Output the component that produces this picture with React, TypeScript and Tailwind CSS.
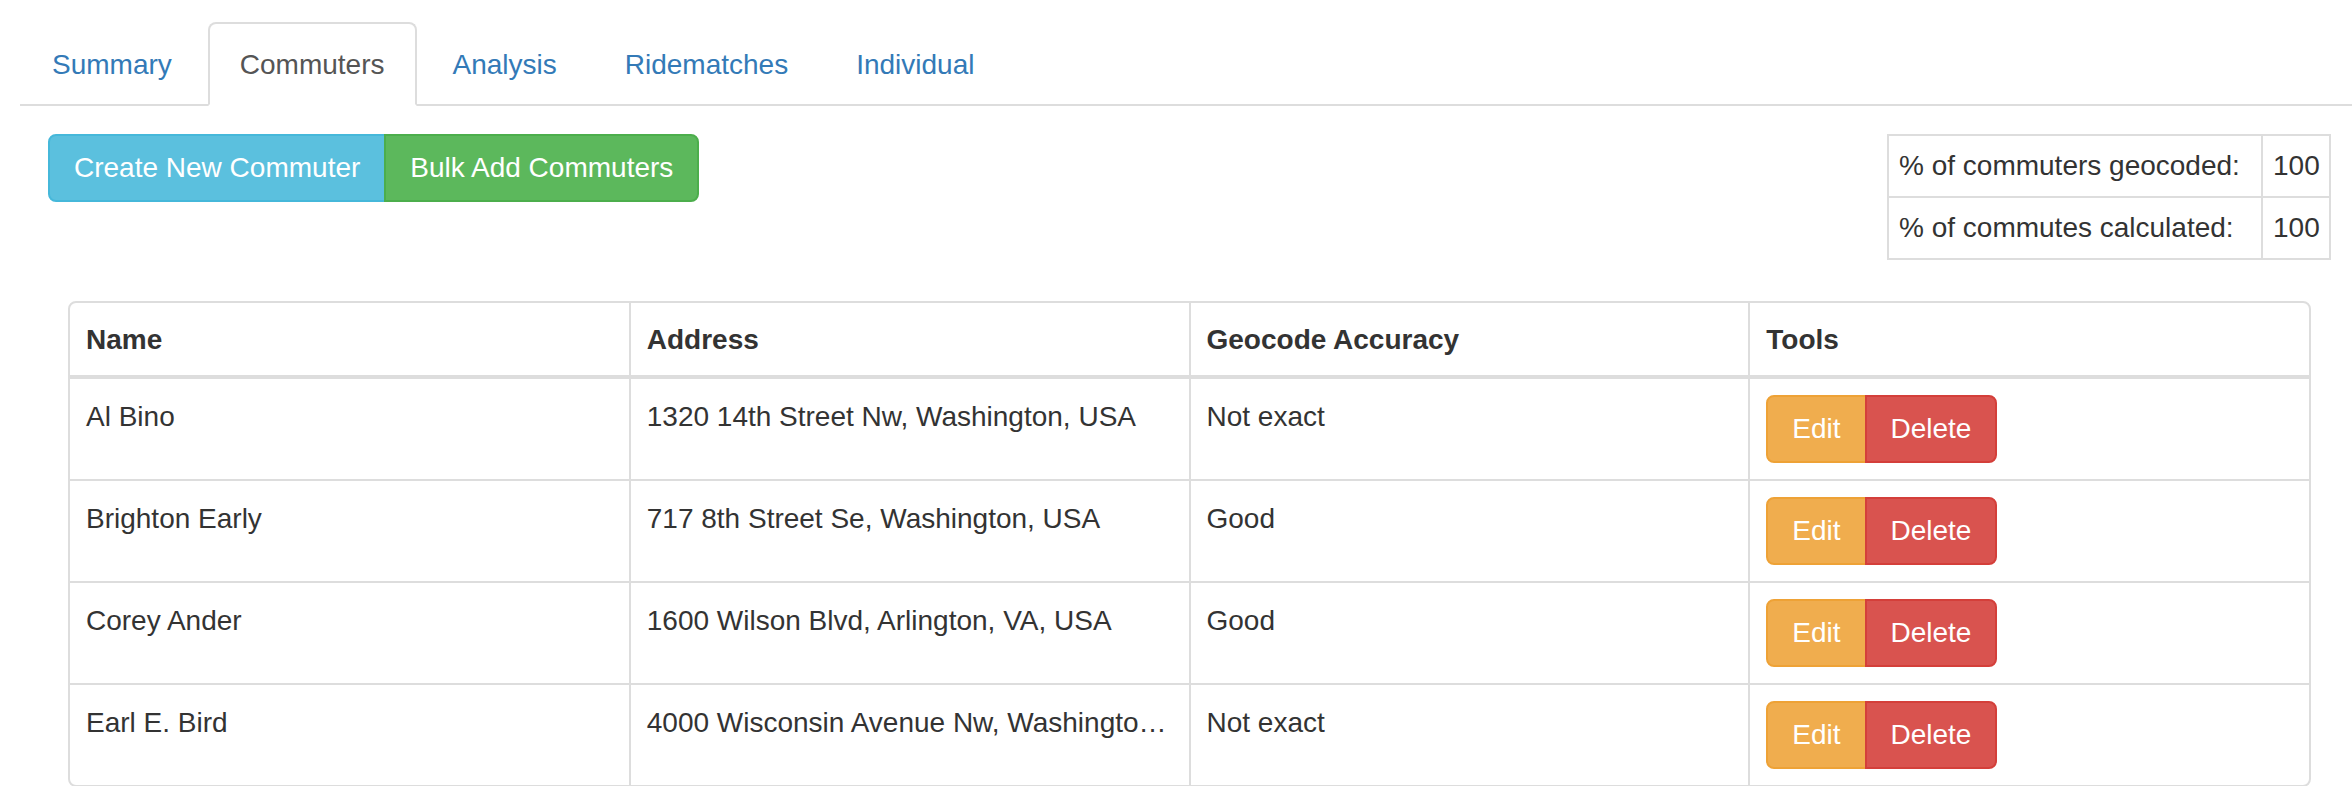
import React from "react";

interface Commuter {
  name: string;
  address: string;
  accuracy: string;
}

const commuters: Commuter[] = [
  { name: "Al Bino", address: "1320 14th Street Nw, Washington, USA", accuracy: "Not exact" },
  { name: "Brighton Early", address: "717 8th Street Se, Washington, USA", accuracy: "Good" },
  { name: "Corey Ander", address: "1600 Wilson Blvd, Arlington, VA, USA", accuracy: "Good" },
  { name: "Earl E. Bird", address: "4000 Wisconsin Avenue Nw, Washington, USA", accuracy: "Not exact" },
];

const tabs = ["Summary", "Commuters", "Analysis", "Ridematches", "Individual"];

const App: React.FC = () => {
  const active = "Commuters";

  return (
    <div className="min-h-screen bg-white text-[#333] text-[28px] leading-[40px] font-['Liberation_Sans',Arial,sans-serif]">
      {/* TABS */}
      <ul className="flex ml-[20px] mt-[22px] border-b-2 border-[#ddd]">
        {tabs.map((t) => (
          <li key={t} className="mr-[4px] -mb-[2px]">
            <a
              className={`block px-[30px] pt-[21px] pb-[19px] rounded-t-[8px] border-2 ${
                t === active
                  ? "border-[#ddd] border-b-white bg-white text-[#555]"
                  : "border-transparent text-[#337ab7]"
              }`}
            >
              {t}
            </a>
          </li>
        ))}
      </ul>

      {/* ACTIONS + STATS */}
      <div className="flex justify-between items-start mt-[28px] pl-[48px] pr-[21px]">
        <div className="flex">
          <button className="px-[24px] py-[12px] border-2 border-[#46b8da] bg-[#5bc0de] text-white rounded-l-[8px]">
            Create New Commuter
          </button>
          <button className="-ml-[2px] px-[24px] py-[12px] border-2 border-[#4cae4c] bg-[#5cb85c] text-white rounded-r-[8px]">
            Bulk Add Commuters
          </button>
        </div>
        <table className="border-collapse table-fixed w-[444px]">
          <colgroup>
            <col className="w-[374px]" />
            <col />
          </colgroup>
          <tbody>
            <tr>
              <td className="border-2 border-[#ddd] px-[10px] py-[10px] whitespace-nowrap">% of commuters geocoded:</td>
              <td className="border-2 border-[#ddd] px-[10px] py-[10px]">100</td>
            </tr>
            <tr>
              <td className="border-2 border-[#ddd] px-[10px] py-[10px] whitespace-nowrap">% of commutes calculated:</td>
              <td className="border-2 border-[#ddd] px-[10px] py-[10px]">100</td>
            </tr>
          </tbody>
        </table>
      </div>

      {/* COMMUTERS TABLE */}
      <div className="ml-[68px] mr-[41px] mt-[41px] border-2 border-[#ddd] rounded-[8px] overflow-hidden">
        <table className="w-full table-fixed border-collapse">
          <thead>
            <tr className="border-b-4 border-[#ddd]">
              <th className="text-left font-bold px-[16px] pt-[17px] pb-[15px]">Name</th>
              <th className="text-left font-bold px-[16px] pt-[17px] pb-[15px] border-l-2 border-[#ddd]">Address</th>
              <th className="text-left font-bold px-[16px] pt-[17px] pb-[15px] border-l-2 border-[#ddd]">Geocode Accuracy</th>
              <th className="text-left font-bold px-[16px] pt-[17px] pb-[15px] border-l-2 border-[#ddd]">Tools</th>
            </tr>
          </thead>
          <tbody>
            {commuters.map((c) => (
              <tr key={c.name} className="border-t-2 border-[#ddd]">
                <td className="align-top px-[16px] pt-[18px] pb-[14px]">{c.name}</td>
                <td className="align-top px-[16px] pt-[18px] pb-[14px] border-l-2 border-[#ddd] truncate">{c.address}</td>
                <td className="align-top px-[16px] pt-[18px] pb-[14px] border-l-2 border-[#ddd]">{c.accuracy}</td>
                <td className="align-top p-[16px] border-l-2 border-[#ddd]">
                  <div className="flex">
                    <button className="px-[24px] py-[12px] border-2 border-[#eea236] bg-[#f0ad4e] text-white rounded-l-[8px]">
                      Edit
                    </button>
                    <button className="-ml-[2px] px-[24px] py-[12px] border-2 border-[#d43f3a] bg-[#d9534f] text-white rounded-r-[8px]">
                      Delete
                    </button>
                  </div>
                </td>
              </tr>
            ))}
          </tbody>
        </table>
      </div>
    </div>
  );
};

export default App;
